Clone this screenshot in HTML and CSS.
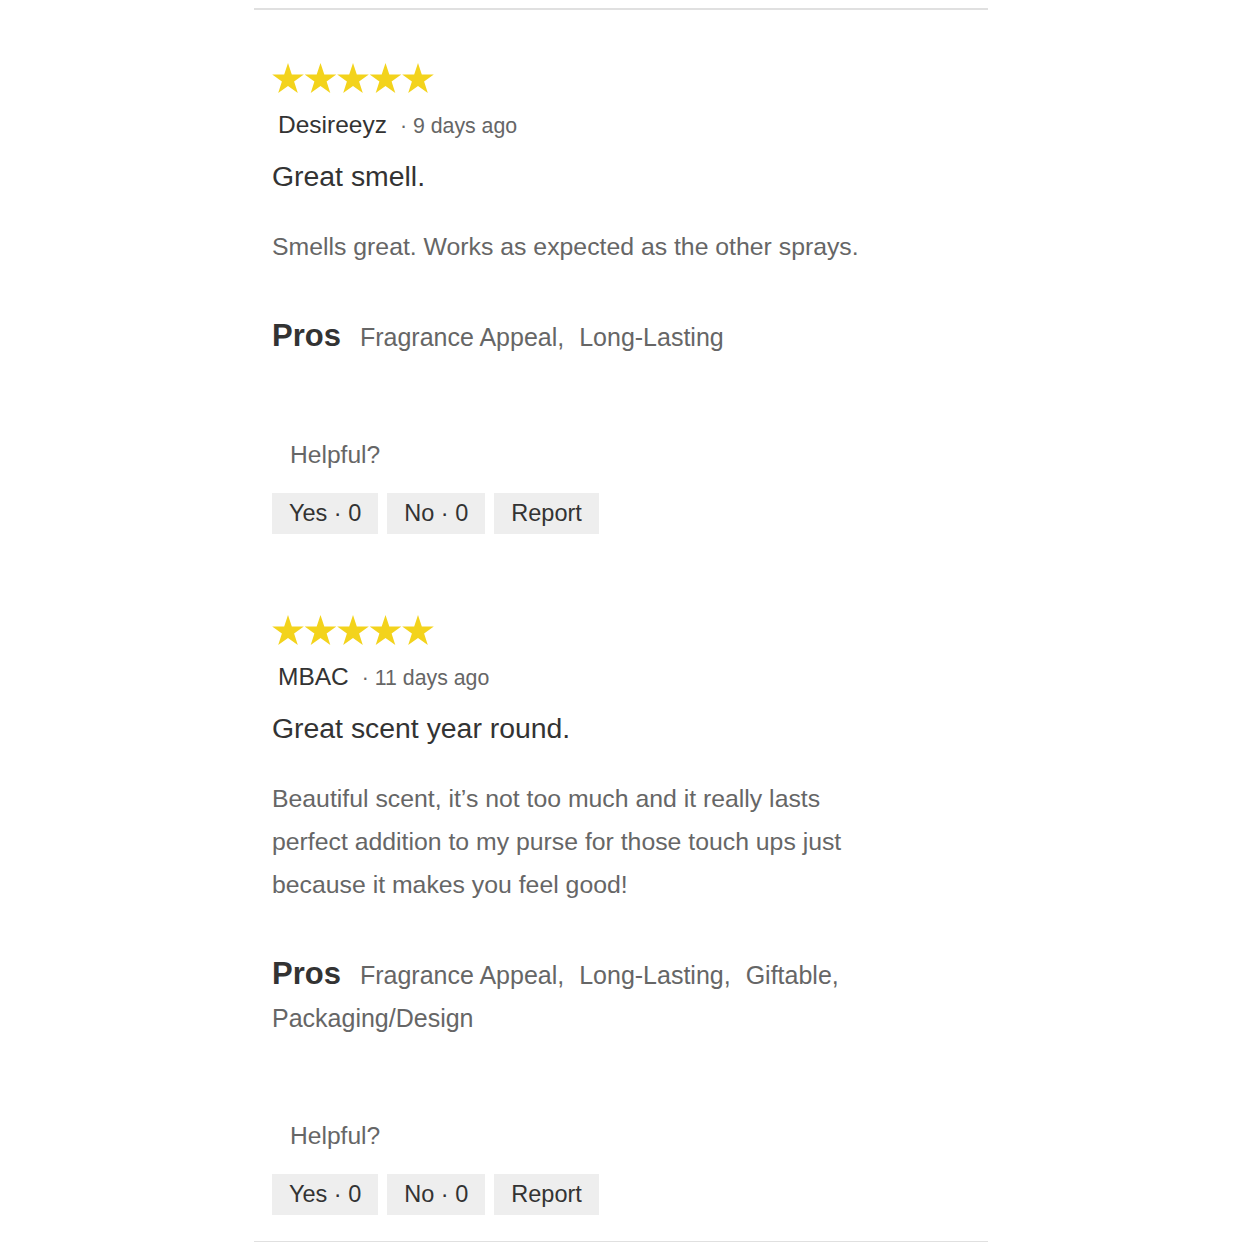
FILE: index.html
```html
<!DOCTYPE html>
<html lang="en">
<head>
  <meta charset="UTF-8"/>
  <meta name="viewport" content="width=device-width, initial-scale=1"/>
  <title>Reviews</title>
  <link rel="stylesheet" href="styles.css">
</head>
<body>

  <div class="reviews">

    <div class="review">
      <svg class="stars" viewBox="0 0 162 34" xmlns="http://www.w3.org/2000/svg">
        <g fill="#f3d31c">
          <polygon points="16,1 19.8,12.4 31.8,12.4 22.1,19.6 25.8,31 16,24 6.2,31 9.9,19.6 0.2,12.4 12.2,12.4"/>
          <polygon transform="translate(32.5,0)" points="16,1 19.8,12.4 31.8,12.4 22.1,19.6 25.8,31 16,24 6.2,31 9.9,19.6 0.2,12.4 12.2,12.4"/>
          <polygon transform="translate(65,0)" points="16,1 19.8,12.4 31.8,12.4 22.1,19.6 25.8,31 16,24 6.2,31 9.9,19.6 0.2,12.4 12.2,12.4"/>
          <polygon transform="translate(97.5,0)" points="16,1 19.8,12.4 31.8,12.4 22.1,19.6 25.8,31 16,24 6.2,31 9.9,19.6 0.2,12.4 12.2,12.4"/>
          <polygon transform="translate(130,0)" points="16,1 19.8,12.4 31.8,12.4 22.1,19.6 25.8,31 16,24 6.2,31 9.9,19.6 0.2,12.4 12.2,12.4"/>
        </g>
      </svg>
      <div class="meta"><span class="author">Desireeyz</span><span class="date">· 9 days ago</span></div>
      <h3 class="title">Great smell.</h3>
      <p class="body">Smells great. Works as expected as the other sprays.</p>
      <p class="pros"><b>Pros</b><span>Fragrance Appeal,</span> <span>Long-Lasting</span></p>
      <div class="helpful">Helpful?</div>
      <div class="actions">
        <button class="btn">Yes · 0</button>
        <button class="btn">No · 0</button>
        <button class="btn">Report</button>
      </div>
    </div>

    <div class="review">
      <svg class="stars" viewBox="0 0 162 34" xmlns="http://www.w3.org/2000/svg">
        <g fill="#f3d31c">
          <polygon points="16,1 19.8,12.4 31.8,12.4 22.1,19.6 25.8,31 16,24 6.2,31 9.9,19.6 0.2,12.4 12.2,12.4"/>
          <polygon transform="translate(32.5,0)" points="16,1 19.8,12.4 31.8,12.4 22.1,19.6 25.8,31 16,24 6.2,31 9.9,19.6 0.2,12.4 12.2,12.4"/>
          <polygon transform="translate(65,0)" points="16,1 19.8,12.4 31.8,12.4 22.1,19.6 25.8,31 16,24 6.2,31 9.9,19.6 0.2,12.4 12.2,12.4"/>
          <polygon transform="translate(97.5,0)" points="16,1 19.8,12.4 31.8,12.4 22.1,19.6 25.8,31 16,24 6.2,31 9.9,19.6 0.2,12.4 12.2,12.4"/>
          <polygon transform="translate(130,0)" points="16,1 19.8,12.4 31.8,12.4 22.1,19.6 25.8,31 16,24 6.2,31 9.9,19.6 0.2,12.4 12.2,12.4"/>
        </g>
      </svg>
      <div class="meta"><span class="author">MBAC</span><span class="date">· 11 days ago</span></div>
      <h3 class="title">Great scent year round.</h3>
      <p class="body">Beautiful scent, it’s not too much and it really lasts perfect addition to my purse for those touch ups just because it makes you feel good!</p>
      <p class="pros"><b>Pros</b><span>Fragrance Appeal,</span> <span>Long-Lasting,</span> <span>Giftable,</span> <span>Packaging/Design</span></p>
      <div class="helpful">Helpful?</div>
      <div class="actions">
        <button class="btn">Yes · 0</button>
        <button class="btn">No · 0</button>
        <button class="btn">Report</button>
      </div>
    </div>

  </div>

</body>
</html>
```

FILE: styles.css
```css
/* --- Reset & Body --- */
* { box-sizing: border-box; margin: 0; padding: 0; }
body {
  background: #ffffff;
  font-family: "Liberation Sans", Arial, sans-serif;
  color: #333333;
}

/* --- List --- */
.reviews {
  width: 734px;
  margin: 8px 0 0 254px;
  border-top: 2px solid #e0e0e0;
  border-bottom: 2px solid #e0e0e0;
}

.review {
  padding: 52px 0 26px 18px;
}
.review + .review { padding-top: 54px; }

.stars {
  display: block;
  width: 162px;
  height: 34px;
}

/* --- Author line --- */
.meta {
  margin-top: 14px;
  padding-left: 6px;
  line-height: 30px;
  display: flex;
  align-items: baseline;
}
.author { font-size: 24.5px; color: #333333; }
.date { font-size: 21.3px; color: #666666; margin-left: 13px; }

/* --- Text --- */
.title {
  margin-top: 17px;
  font-size: 28.4px;
  font-weight: normal;
  line-height: 36px;
  color: #333333;
}
.body {
  margin-top: 31px;
  width: 600px;
  font-size: 24.8px;
  line-height: 43px;
  color: #666666;
}

/* --- Pros --- */
.pros {
  margin-top: 46px;
  width: 600px;
  font-size: 25px;
  line-height: 43px;
  color: #666666;
}
.pros b {
  font-size: 31px;
  color: #333333;
  margin-right: 19px;
}
.pros span { margin-right: 8px; }

/* --- Helpful --- */
.helpful {
  margin-top: 81px;
  padding-left: 18px;
  font-size: 24.6px;
  line-height: 30px;
  color: #666666;
}
.actions {
  margin-top: 23px;
  display: flex;
  gap: 9px;
}
.btn {
  height: 41px;
  padding: 0 17px;
  border: none;
  background: #eeeeee;
  font-family: "Liberation Sans", Arial, sans-serif;
  font-size: 23.5px;
  color: #333333;
}
```
